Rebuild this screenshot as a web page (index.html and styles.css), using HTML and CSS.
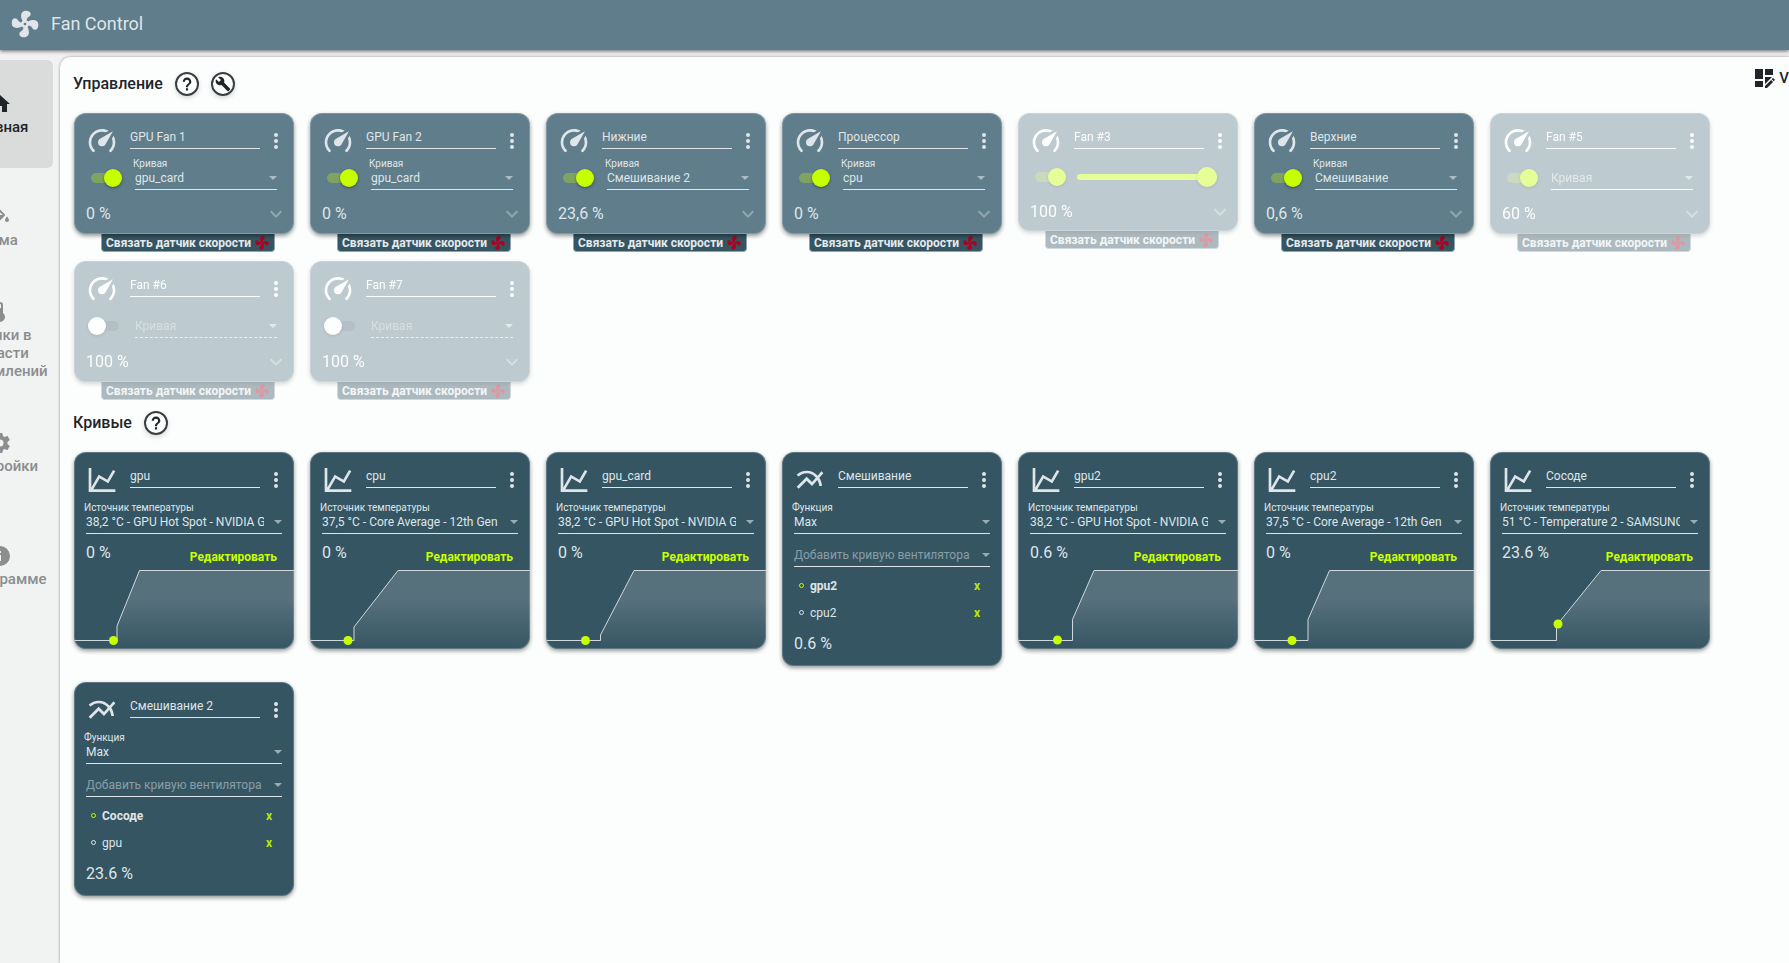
FILE: index.html
```html
<!DOCTYPE html>
<html lang="ru">
<head>
<meta charset="utf-8">
<title>Fan Control</title>
<link rel="stylesheet" href="styles.css">
</head>
<body>
<svg class="defs" aria-hidden="true">
  <defs>
    <linearGradient id="fade" x1="0" y1="0" x2="0" y2="1">
      <stop offset="0.38" stop-color="#fff" stop-opacity="0.16"/>
      <stop offset="1" stop-color="#fff" stop-opacity="0"/>
    </linearGradient>
  </defs>
  <symbol id="fan" viewBox="0 0 24 24"><path d="M12,11A1,1 0 0,0 11,12A1,1 0 0,0 12,13A1,1 0 0,0 13,12A1,1 0 0,0 12,11M12.5,2C17,2 17.11,5.57 14.75,6.75C13.76,7.24 13.32,8.29 13.13,9.22C13.61,9.42 14.03,9.73 14.35,10.13C18.05,8.13 22.03,8.92 22.03,12.5C22.03,17 18.46,17.1 17.28,14.73C16.78,13.74 15.72,13.3 14.79,13.11C14.59,13.59 14.28,14 13.88,14.34C15.87,18.03 15.08,22 11.5,22C7,22 6.91,18.42 9.27,17.24C10.25,16.75 10.69,15.71 10.89,14.79C10.4,14.59 9.97,14.27 9.65,13.87C5.96,15.85 2,15.07 2,11.5C2,7 5.56,6.89 6.74,9.26C7.24,10.25 8.29,10.68 9.22,10.87C9.41,10.39 9.73,9.97 10.14,9.65C8.15,5.96 8.94,2 12.5,2Z"/></symbol>
  <symbol id="gauge" viewBox="0 0 24 24"><path d="M12,16A3,3 0 0,1 9,13C9,11.88 9.61,10.9 10.5,10.39L20.21,4.77L14.68,14.35C14.18,15.33 13.17,16 12,16M12,3C13.81,3 15.5,3.5 16.97,4.32L14.87,5.53C14,5.19 13,5 12,5A8,8 0 0,0 4,13C4,15.21 4.89,17.21 6.34,18.65H6.35C6.74,19.04 6.74,19.67 6.35,20.06C5.96,20.45 5.32,20.45 4.93,20.07V20.07C3.12,18.26 2,15.76 2,13A10,10 0 0,1 12,3M22,13C22,15.76 20.88,18.26 19.07,20.07V20.07C18.68,20.45 18.05,20.45 17.66,20.06C17.27,19.67 17.27,19.04 17.66,18.65V18.65C19.11,17.2 20,15.21 20,13C20,12 19.81,11 19.46,10.1L20.67,8C21.5,9.5 22,11.18 22,13Z"/></symbol>
  <symbol id="line" viewBox="0 0 24 24"><path d="M16,11.78L20.24,4.45L21.97,5.45L16.74,14.5L10.23,10.75L5.46,19H22V21H2V3H4V17.54L9.5,8L16,11.78Z"/></symbol>
  <symbol id="mix" viewBox="0 0 24 24"><path d="M22 6.92l-1.41-1.41-2.85 3.21C15.68 6.4 12.83 5 9.61 5 6.72 5 4.07 6.16 2 8l1.42 1.42C5.12 7.93 7.27 7 9.61 7c2.74 0 5.09 1.26 6.77 3.24l-2.88 3.24-4-4L2 16.99l1.5 1.5 6-6.01 4 4 4.05-4.55c.75 1.35 1.25 2.9 1.44 4.55H21c-.22-2.3-.95-4.39-2.04-6.14L22 6.92z"/></symbol>
  <symbol id="dots" viewBox="0 0 24 24"><circle cx="12" cy="6" r="2"/><circle cx="12" cy="12" r="2"/><circle cx="12" cy="18" r="2"/></symbol>
  <symbol id="chevron" viewBox="0 0 24 24"><path d="M7.41,8.58L12,13.17L16.59,8.58L18,10L12,16L6,10Z"/></symbol>
  <symbol id="home" viewBox="0 0 24 24"><path d="M10,20V14H14V20H19V12H22L12,3L2,12H5V20H10Z"/></symbol>
  <symbol id="fill" viewBox="0 0 24 24"><path d="M19,11.5C19,11.5 17,13.67 17,15A2,2 0 0,0 19,17A2,2 0 0,0 21,15C21,13.67 19,11.5 19,11.5M5.21,10L10,5.21L14.79,10M16.56,8.94L7.62,0L6.21,1.41L8.59,3.79L3.44,8.94C2.85,9.5 2.85,10.47 3.44,11.06L8.94,16.56C9.23,16.85 9.62,17 10,17C10.38,17 10.77,16.85 11.06,16.56L16.56,11.06C17.15,10.47 17.15,9.5 16.56,8.94Z"/></symbol>
  <symbol id="thermo" viewBox="0 0 24 24"><path d="M15 13V5A3 3 0 0 0 9 5V13A5 5 0 1 0 15 13M12 4A1 1 0 0 1 13 5V8H11V5A1 1 0 0 1 12 4Z"/></symbol>
  <symbol id="cog" viewBox="0 0 24 24"><path d="M12,15.5A3.5,3.5 0 0,1 8.5,12A3.5,3.5 0 0,1 12,8.5A3.5,3.5 0 0,1 15.5,12A3.5,3.5 0 0,1 12,15.5M19.43,12.97C19.47,12.65 19.5,12.33 19.5,12C19.5,11.67 19.47,11.34 19.43,11L21.54,9.37C21.73,9.22 21.78,8.95 21.66,8.73L19.66,5.27C19.54,5.05 19.27,4.96 19.05,5.05L16.56,6.05C16.04,5.66 15.5,5.32 14.87,5.07L14.5,2.42C14.46,2.18 14.25,2 14,2H10C9.75,2 9.54,2.18 9.5,2.42L9.13,5.07C8.5,5.32 7.96,5.66 7.44,6.05L4.95,5.05C4.73,4.96 4.46,5.05 4.34,5.27L2.34,8.73C2.21,8.95 2.27,9.22 2.46,9.37L4.57,11C4.53,11.34 4.5,11.67 4.5,12C4.5,12.33 4.53,12.65 4.57,12.97L2.46,14.63C2.27,14.78 2.21,15.05 2.34,15.27L4.34,18.73C4.46,18.95 4.73,19.03 4.95,18.95L7.44,17.94C7.96,18.34 8.5,18.68 9.13,18.93L9.5,21.58C9.54,21.82 9.75,22 10,22H14C14.25,22 14.46,21.82 14.5,21.58L14.87,18.93C15.5,18.67 16.04,18.34 16.56,17.94L19.05,18.95C19.27,19.03 19.54,18.95 19.66,18.73L21.66,15.27C21.78,15.05 21.73,14.78 21.54,14.63L19.43,12.97Z"/></symbol>
  <symbol id="info" viewBox="0 0 24 24"><path d="M13,9H11V7H13M13,17H11V11H13M12,2A10,10 0 0,0 2,12A10,10 0 0,0 12,22A10,10 0 0,0 22,12A10,10 0 0,0 12,2Z"/></symbol>
  <symbol id="wrench" viewBox="0 0 24 24"><path d="M22.7,19L13.6,9.9C14.5,7.6 14,4.9 12.1,3C10.1,1 7.1,0.6 4.7,1.7L9,6L6,9L1.6,4.7C0.4,7.1 0.9,10.1 2.9,12.1C4.8,14 7.5,14.5 9.8,13.6L18.9,22.7C19.3,23.1 19.9,23.1 20.3,22.7L22.6,20.4C23.1,20 23.1,19.3 22.7,19Z"/></symbol>
  <symbol id="help" viewBox="0 0 24 24"><path d="M11,18H13V16H11V18M12,6A4,4 0 0,0 8,10H10A2,2 0 0,1 12,8A2,2 0 0,1 14,10C14,12 11,11.75 11,15H13C13,12.75 16,12.5 16,10A4,4 0 0,0 12,6Z"/></symbol>
  <symbol id="layout" viewBox="0 0 24 24"><path d="M3,3H11V13H3ZM13,3H21V9H13ZM3,15H11V21H3ZM13,11H20L13,18ZM13,20L19.1,13.9L21.1,15.9L15,22H13ZM19.7,13.3L20.7,12.3Q21,12 21.4,12.3L22.7,13.6Q23,14 22.7,14.3L21.7,15.3Z"/></symbol>
</svg>

<header class="topbar">
  <svg class="logo"><use href="#fan"/></svg>
  <h1>Fan Control</h1>
</header>

<div class="shell">
  <nav class="nav">
    <a class="nav-item active" href="#home"><svg><use href="#home"/></svg><span>Главная</span></a>
    <a class="nav-item" href="#theme"><svg><use href="#fill"/></svg><span>Тема</span></a>
    <a class="nav-item" href="#tray"><svg><use href="#thermo"/></svg><span>Значки в<br>области<br>уведомлений</span></a>
    <a class="nav-item" href="#settings"><svg><use href="#cog"/></svg><span>Настройки</span></a>
    <a class="nav-item" href="#about"><svg><use href="#info"/></svg><span>О программе</span></a>
  </nav>

  <main class="panel">
    <div class="section-head">
      <h2>Управление</h2>
      <button class="round" aria-label="Справка"><svg class="q"><use href="#help"/></svg></button>
      <button class="round" aria-label="Настройка"><svg><use href="#wrench"/></svg></button>
      <button class="view"><svg><use href="#layout"/></svg><span>V</span></button>
    </div>

    <section class="cards fans">
      <article class="fan">
        <div class="card control">
          <div class="head"><svg><use href="#gauge"/></svg><input class="name" aria-label="Имя" value="GPU Fan 1"><button class="icon" aria-label="Меню"><svg><use href="#dots"/></svg></button></div>
          <div class="body"><input class="switch" type="checkbox" aria-label="Включить" checked><div class="field"><label for="f1">Кривая</label><span class="pick"><select id="f1"><option>gpu_card</option></select></span></div></div>
          <div class="foot"><span class="pct">0 %</span><button class="icon more" aria-label="Развернуть"><svg><use href="#chevron"/></svg></button></div>
        </div>
        <button class="pair">Связать датчик скорости<svg><use href="#fan"/></svg></button>
      </article>
      <article class="fan">
        <div class="card control">
          <div class="head"><svg><use href="#gauge"/></svg><input class="name" aria-label="Имя" value="GPU Fan 2"><button class="icon" aria-label="Меню"><svg><use href="#dots"/></svg></button></div>
          <div class="body"><input class="switch" type="checkbox" aria-label="Включить" checked><div class="field"><label for="f2">Кривая</label><span class="pick"><select id="f2"><option>gpu_card</option></select></span></div></div>
          <div class="foot"><span class="pct">0 %</span><button class="icon more" aria-label="Развернуть"><svg><use href="#chevron"/></svg></button></div>
        </div>
        <button class="pair">Связать датчик скорости<svg><use href="#fan"/></svg></button>
      </article>
      <article class="fan">
        <div class="card control">
          <div class="head"><svg><use href="#gauge"/></svg><input class="name" aria-label="Имя" value="Нижние"><button class="icon" aria-label="Меню"><svg><use href="#dots"/></svg></button></div>
          <div class="body"><input class="switch" type="checkbox" aria-label="Включить" checked><div class="field"><label for="f3">Кривая</label><span class="pick"><select id="f3"><option>Смешивание 2</option></select></span></div></div>
          <div class="foot"><span class="pct">23,6 %</span><button class="icon more" aria-label="Развернуть"><svg><use href="#chevron"/></svg></button></div>
        </div>
        <button class="pair">Связать датчик скорости<svg><use href="#fan"/></svg></button>
      </article>
      <article class="fan">
        <div class="card control">
          <div class="head"><svg><use href="#gauge"/></svg><input class="name" aria-label="Имя" value="Процессор"><button class="icon" aria-label="Меню"><svg><use href="#dots"/></svg></button></div>
          <div class="body"><input class="switch" type="checkbox" aria-label="Включить" checked><div class="field"><label for="f4">Кривая</label><span class="pick"><select id="f4"><option>cpu</option></select></span></div></div>
          <div class="foot"><span class="pct">0 %</span><button class="icon more" aria-label="Развернуть"><svg><use href="#chevron"/></svg></button></div>
        </div>
        <button class="pair">Связать датчик скорости<svg><use href="#fan"/></svg></button>
      </article>
      <article class="fan dim">
        <div class="card control">
          <div class="head"><svg><use href="#gauge"/></svg><input class="name" aria-label="Имя" value="Fan #3"><button class="icon" aria-label="Меню"><svg><use href="#dots"/></svg></button></div>
          <div class="body manual"><input class="switch" type="checkbox" aria-label="Включить" checked><input class="slider" type="range" min="0" max="100" value="100" aria-label="Скорость"></div>
          <div class="foot"><span class="pct">100 %</span><button class="icon more" aria-label="Развернуть"><svg><use href="#chevron"/></svg></button></div>
        </div>
        <button class="pair">Связать датчик скорости<svg><use href="#fan"/></svg></button>
      </article>
      <article class="fan">
        <div class="card control">
          <div class="head"><svg><use href="#gauge"/></svg><input class="name" aria-label="Имя" value="Верхние"><button class="icon" aria-label="Меню"><svg><use href="#dots"/></svg></button></div>
          <div class="body"><input class="switch" type="checkbox" aria-label="Включить" checked><div class="field"><label for="f6">Кривая</label><span class="pick"><select id="f6"><option>Смешивание</option></select></span></div></div>
          <div class="foot"><span class="pct">0,6 %</span><button class="icon more" aria-label="Развернуть"><svg><use href="#chevron"/></svg></button></div>
        </div>
        <button class="pair">Связать датчик скорости<svg><use href="#fan"/></svg></button>
      </article>
      <article class="fan dim">
        <div class="card control">
          <div class="head"><svg><use href="#gauge"/></svg><input class="name" aria-label="Имя" value="Fan #5"><button class="icon" aria-label="Меню"><svg><use href="#dots"/></svg></button></div>
          <div class="body"><input class="switch" type="checkbox" aria-label="Включить" checked><div class="field"><span class="pick"><select class="empty" aria-label="Кривая"><option>Кривая</option></select></span></div></div>
          <div class="foot"><span class="pct">60 %</span><button class="icon more" aria-label="Развернуть"><svg><use href="#chevron"/></svg></button></div>
        </div>
        <button class="pair">Связать датчик скорости<svg><use href="#fan"/></svg></button>
      </article>
      <article class="fan dim">
        <div class="card control">
          <div class="head"><svg><use href="#gauge"/></svg><input class="name" aria-label="Имя" value="Fan #6"><button class="icon" aria-label="Меню"><svg><use href="#dots"/></svg></button></div>
          <div class="body"><input class="switch" type="checkbox" aria-label="Включить"><div class="field"><span class="pick"><select class="empty" aria-label="Кривая" disabled><option>Кривая</option></select></span></div></div>
          <div class="foot"><span class="pct">100 %</span><button class="icon more" aria-label="Развернуть"><svg><use href="#chevron"/></svg></button></div>
        </div>
        <button class="pair">Связать датчик скорости<svg><use href="#fan"/></svg></button>
      </article>
      <article class="fan dim">
        <div class="card control">
          <div class="head"><svg><use href="#gauge"/></svg><input class="name" aria-label="Имя" value="Fan #7"><button class="icon" aria-label="Меню"><svg><use href="#dots"/></svg></button></div>
          <div class="body"><input class="switch" type="checkbox" aria-label="Включить"><div class="field"><span class="pick"><select class="empty" aria-label="Кривая" disabled><option>Кривая</option></select></span></div></div>
          <div class="foot"><span class="pct">100 %</span><button class="icon more" aria-label="Развернуть"><svg><use href="#chevron"/></svg></button></div>
        </div>
        <button class="pair">Связать датчик скорости<svg><use href="#fan"/></svg></button>
      </article>
    </section>

    <div class="section-head">
      <h2>Кривые</h2>
      <button class="round" aria-label="Справка"><svg class="q"><use href="#help"/></svg></button>
    </div>

    <section class="cards curves">
      <article class="card curve">
        <div class="head"><svg><use href="#line"/></svg><input class="name" aria-label="Имя" value="gpu"><button class="icon" aria-label="Меню"><svg><use href="#dots"/></svg></button></div>
        <div class="field"><label for="c1">Источник температуры</label><span class="pick"><select id="c1"><option>38,2 °C - GPU Hot Spot - NVIDIA GeForce</option></select></span></div>
        <div class="stat"><span class="pct">0 %</span><button class="edit">Редактировать</button></div>
        <svg class="chart" viewBox="0 0 220 81"><path class="area" d="M43,72.5V58L65.5,2.5H220V81H43Z"/><path class="stroke" d="M0,72.5H43V58L65.5,2.5H220"/><circle cx="39.5" cy="72.5" r="4.5"/></svg>
      </article>
      <article class="card curve">
        <div class="head"><svg><use href="#line"/></svg><input class="name" aria-label="Имя" value="cpu"><button class="icon" aria-label="Меню"><svg><use href="#dots"/></svg></button></div>
        <div class="field"><label for="c2">Источник температуры</label><span class="pick"><select id="c2"><option>37,5 °C - Core Average - 12th Gen</option></select></span></div>
        <div class="stat"><span class="pct">0 %</span><button class="edit">Редактировать</button></div>
        <svg class="chart" viewBox="0 0 220 81"><path class="area" d="M44,72.5V59L88,2.5H220V81H44Z"/><path class="stroke" d="M0,72.5H44V59L88,2.5H220"/><circle cx="38" cy="72.5" r="4.5"/></svg>
      </article>
      <article class="card curve">
        <div class="head"><svg><use href="#line"/></svg><input class="name" aria-label="Имя" value="gpu_card"><button class="icon" aria-label="Меню"><svg><use href="#dots"/></svg></button></div>
        <div class="field"><label for="c3">Источник температуры</label><span class="pick"><select id="c3"><option>38,2 °C - GPU Hot Spot - NVIDIA GeForce</option></select></span></div>
        <div class="stat"><span class="pct">0 %</span><button class="edit">Редактировать</button></div>
        <svg class="chart" viewBox="0 0 220 81"><path class="area" d="M54.5,72.5V67L88,2.5H220V81H54.5Z"/><path class="stroke" d="M0,72.5H54.5V67L88,2.5H220"/><circle cx="39.5" cy="72.5" r="4.5"/></svg>
      </article>
      <article class="card curve">
        <div class="head"><svg><use href="#mix"/></svg><input class="name" aria-label="Имя" value="Смешивание"><button class="icon" aria-label="Меню"><svg><use href="#dots"/></svg></button></div>
        <div class="field"><label for="c4">Функция</label><span class="pick"><select id="c4"><option>Max</option></select></span></div>
        <div class="field add"><span class="pick"><select class="empty" aria-label="Добавить кривую вентилятора"><option>Добавить кривую вентилятора</option></select></span></div>
        <ul class="sources">
          <li class="on"><i></i><span>gpu2</span><button aria-label="Удалить gpu2">x</button></li>
          <li><i></i><span>cpu2</span><button aria-label="Удалить cpu2">x</button></li>
        </ul>
        <div class="result"><span class="pct">0.6 %</span></div>
      </article>
      <article class="card curve">
        <div class="head"><svg><use href="#line"/></svg><input class="name" aria-label="Имя" value="gpu2"><button class="icon" aria-label="Меню"><svg><use href="#dots"/></svg></button></div>
        <div class="field"><label for="c5">Источник температуры</label><span class="pick"><select id="c5"><option>38,2 °C - GPU Hot Spot - NVIDIA GeForce</option></select></span></div>
        <div class="stat"><span class="pct">0.6 %</span><button class="edit">Редактировать</button></div>
        <svg class="chart" viewBox="0 0 220 81"><path class="area" d="M54.5,72.5V51.5L76,2.5H220V81H54.5Z"/><path class="stroke" d="M0,72.5H54.5V51.5L76,2.5H220"/><circle cx="39.5" cy="72" r="4.5"/></svg>
      </article>
      <article class="card curve">
        <div class="head"><svg><use href="#line"/></svg><input class="name" aria-label="Имя" value="cpu2"><button class="icon" aria-label="Меню"><svg><use href="#dots"/></svg></button></div>
        <div class="field"><label for="c6">Источник температуры</label><span class="pick"><select id="c6"><option>37,5 °C - Core Average - 12th Gen</option></select></span></div>
        <div class="stat"><span class="pct">0 %</span><button class="edit">Редактировать</button></div>
        <svg class="chart" viewBox="0 0 220 81"><path class="area" d="M54,72.5V51.5L75.5,2.5H220V81H54Z"/><path class="stroke" d="M0,72.5H54V51.5L75.5,2.5H220"/><circle cx="38" cy="72.5" r="4.5"/></svg>
      </article>
      <article class="card curve">
        <div class="head"><svg><use href="#line"/></svg><input class="name" aria-label="Имя" value="Сосоде"><button class="icon" aria-label="Меню"><svg><use href="#dots"/></svg></button></div>
        <div class="field"><label for="c7">Источник температуры</label><span class="pick"><select id="c7"><option>51 °C - Temperature 2 - SAMSUNG</option></select></span></div>
        <div class="stat"><span class="pct">23.6 %</span><button class="edit">Редактировать</button></div>
        <svg class="chart" viewBox="0 0 220 81"><path class="area" d="M66.5,72.5V57.5L111,2.5H220V81H66.5Z"/><path class="stroke" d="M0,72.5H66.5V57.5L111,2.5H220"/><circle cx="68" cy="56" r="4.5"/></svg>
      </article>
      <article class="card curve">
        <div class="head"><svg><use href="#mix"/></svg><input class="name" aria-label="Имя" value="Смешивание 2"><button class="icon" aria-label="Меню"><svg><use href="#dots"/></svg></button></div>
        <div class="field"><label for="c8">Функция</label><span class="pick"><select id="c8"><option>Max</option></select></span></div>
        <div class="field add"><span class="pick"><select class="empty" aria-label="Добавить кривую вентилятора"><option>Добавить кривую вентилятора</option></select></span></div>
        <ul class="sources">
          <li class="on"><i></i><span>Сосоде</span><button aria-label="Удалить Сосоде">x</button></li>
          <li><i></i><span>gpu</span><button aria-label="Удалить gpu">x</button></li>
        </ul>
        <div class="result"><span class="pct">23.6 %</span></div>
      </article>
    </section>
  </main>
</div>
</body>
</html>
```
FILE: styles.css
```css
:root {
  --slate: #607d8b;
  --deep: #365563;
  --lime: #c6ff00;
  --text: #dfe5e8;
  --ink: #212529;
}

* { box-sizing: border-box; }

body {
  margin: 0;
  height: 100vh;
  display: flex;
  flex-direction: column;
  overflow: hidden;
  background: #f1f3f3;
  color: var(--ink);
  font: 12px/16px Roboto, "Noto Sans", sans-serif;
}

button, input, select {
  margin: 0;
  padding: 0;
  border: 0;
  background: none;
  color: inherit;
  font: inherit;
}

svg { display: block; flex: none; fill: currentColor; }
.defs { position: absolute; width: 0; height: 0; }

.topbar {
  position: relative;
  z-index: 2;
  flex: none;
  display: flex;
  align-items: center;
  gap: 10px;
  height: 50px;
  padding: 0 9px 2px;
  background: var(--slate);
  color: var(--text);
  box-shadow: 0 1px 4px rgba(0, 0, 0, 0.6);
}
.logo { width: 32px; height: 32px; }
.topbar h1 { margin: 0; font-size: 18px; line-height: 24px; font-weight: 400; }

.shell { flex: 1; display: flex; min-height: 0; padding-top: 7px; }

/* The drawer is slid half-way off the left edge. */
.nav {
  flex: none;
  display: flex;
  flex-direction: column;
  gap: 5px;
  width: 106px;
  margin: 3px 7px 0 -53px;
}
.nav-item {
  display: flex;
  flex-direction: column;
  align-items: center;
  justify-content: center;
  gap: 2px;
  height: 108px;
  padding-bottom: 1px;
  border-radius: 6px;
  color: #8b8d8f;
  font-size: 15px;
  line-height: 18px;
  font-weight: 500;
  text-align: center;
  text-decoration: none;
}
.nav-item svg { width: 24px; height: 24px; }
.nav-item.active { background: #dadcdc; color: var(--ink); }

.panel {
  flex: 1;
  min-width: 0;
  padding: 9px 0 0 13px;
  border-radius: 10px 0 0 0;
  background: #fcfefe;
  box-shadow: 0 0 3px rgba(0, 0, 0, 0.4);
}

.section-head { display: flex; align-items: center; gap: 12px; height: 35px; }
.section-head h2 { margin: 0; font-size: 16px; line-height: 24px; font-weight: 500; }
.round {
  display: flex;
  align-items: center;
  justify-content: center;
  width: 24px;
  height: 24px;
  border: 2px solid #3a3e42;
  border-radius: 50%;
  box-shadow: 0 2px 5px rgba(0, 0, 0, 0.15);
}
.round svg { width: 16px; height: 16px; }
.round .q { width: 26px; height: 26px; }
.view {
  display: flex;
  align-items: center;
  align-self: start;
  gap: 3px;
  margin-left: auto;
  font-size: 15px;
  font-weight: 500;
}
.view svg { width: 24px; height: 24px; }

.cards {
  display: grid;
  grid-template-columns: repeat(auto-fill, 220px);
  align-items: start;
  column-gap: 16px;
}
.fans { row-gap: 9px; margin: 12px 0 5px 1px; }
.curves { row-gap: 16px; margin: 12px 0 0 1px; }

.card {
  position: relative;
  overflow: hidden;
  border-radius: 12px;
  color: var(--text);
  box-shadow: 0 2px 4px rgba(0, 0, 0, 0.4), inset 0 0 0 1px rgba(255, 255, 255, 0.2);
}
.control { background: var(--slate); }
.curve { background: var(--deep); }
.fan { display: flex; flex-direction: column; }
.dim { opacity: 0.4; }
.dim .card { color: #fff; }

.head { display: flex; align-items: center; padding: 12px 6px 0 12px; }
.head > svg { width: 32px; height: 32px; }
.name {
  flex: 1;
  align-self: start;
  min-width: 0;
  height: 24px;
  margin: 0 4px 0 12px;
  border-bottom: 1px solid currentColor;
}
.icon svg { width: 24px; height: 24px; }

.body { display: flex; align-items: end; gap: 11px; height: 33px; padding: 0 17px 0 14px; }
.body.manual { height: 32px; }
.body .field { flex: 1; }

.switch {
  appearance: none;
  position: relative;
  flex: none;
  display: flex;
  align-items: center;
  width: 34px;
  height: 24px;
}
.switch::before {
  content: "";
  position: absolute;
  inset: 7px 3px;
  border-radius: 5px;
  background: rgba(0, 0, 0, 0.2);
}
.switch::after {
  content: "";
  position: relative;
  width: 18px;
  height: 18px;
  border-radius: 50%;
  background: #fff;
  box-shadow: 0 1px 3px rgba(0, 0, 0, 0.4);
}
.switch:checked { justify-content: end; }
.switch:checked::before { background: rgba(198, 255, 0, 0.3); }
.switch:checked::after { background: var(--lime); }

.slider { appearance: none; flex: 1; min-width: 0; height: 24px; margin-right: 4px; }
.slider::-webkit-slider-runnable-track { height: 6px; border-radius: 3px; background: var(--lime); }
.slider::-webkit-slider-thumb {
  appearance: none;
  width: 20px;
  height: 20px;
  margin-top: -7px;
  border-radius: 50%;
  background: var(--lime);
  box-shadow: 0 1px 3px rgba(0, 0, 0, 0.4);
}

.field label { display: block; font-size: 10px; line-height: 12px; }
.pick { position: relative; display: block; margin-left: 2px; }
.pick::after {
  content: "";
  position: absolute;
  right: 0;
  top: 6px;
  border: 4px solid transparent;
  border-top-color: currentColor;
  border-bottom: 0;
  opacity: 0.6;
}
.pick select {
  appearance: none;
  display: block;
  width: 100%;
  height: 20px;
  padding: 0 18px 4px 0;
  border-bottom: 1px solid currentColor;
  opacity: 1;
  overflow: hidden;
  text-overflow: clip;
}
.pick .empty { color: rgba(223, 229, 232, 0.5); border-bottom-color: var(--text); }
.dim .pick .empty { color: rgba(255, 255, 255, 0.6); border-bottom-color: #fff; }
.dim .pick .empty:disabled { color: rgba(255, 255, 255, 0.4); border-bottom: 1px dashed rgba(255, 255, 255, 0.7); }

.foot { display: flex; align-items: center; justify-content: space-between; height: 44px; padding: 4px 6px 0 12px; }
.manual + .foot { height: 42px; }
.pct { font-size: 16px; line-height: 20px; }
.more { opacity: 0.4; }

.pair {
  display: flex;
  align-items: center;
  align-self: start;
  gap: 3px;
  height: 18px;
  margin-left: 27px;
  padding: 0 4px;
  border: 1px solid #8fa3ad;
  border-top: 0;
  border-radius: 0 0 4px 4px;
  background: var(--deep);
  color: #e4e9eb;
  font-weight: 700;
  white-space: nowrap;
}
.pair svg { width: 16px; height: 16px; fill: #b00020; }

.curve .field { padding: 6px 12px 0 10px; }
.curve .field + .field { padding-top: 0; }
.curve .add { margin-top: 13px; }

.stat { display: flex; justify-content: space-between; height: 34px; padding: 9px 17px 1px 12px; }
.edit { align-self: end; height: 20px; color: var(--lime); font-weight: 700; }
.chart { width: 100%; height: 81px; }
.chart .area { fill: url(#fade); }
.chart .stroke { fill: none; stroke: #cfd8dc; }
.chart circle { fill: var(--lime); }

.sources { margin: 5px 0 0; padding: 0 22px 0 17px; list-style: none; }
.sources li { display: flex; align-items: center; gap: 6px; height: 27px; }
.sources i { width: 5px; height: 5px; border: 1px solid currentColor; border-radius: 50%; }
.sources span { flex: 1; }
.sources button { color: #b5ea05; font-weight: 700; }
.sources .on { font-weight: 700; }
.sources .on i { border-color: var(--lime); }
.result { padding: 8px 12px 12px; }
```
